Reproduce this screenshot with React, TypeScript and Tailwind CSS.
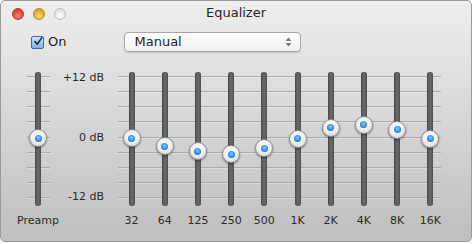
import React from "react";

const bands: { label: string; v: number }[] = [
  { label: "32", v: 0 },
  { label: "64", v: -1.6 },
  { label: "125", v: -2.6 },
  { label: "250", v: -3.2 },
  { label: "500", v: -2 },
  { label: "1K", v: -0.1 },
  { label: "2K", v: 2 },
  { label: "4K", v: 2.6 },
  { label: "8K", v: 1.6 },
  { label: "16K", v: -0.1 },
];

function GridLines() {
  return (
    <div className="flex h-[122px] flex-col justify-between">
      {Array.from({ length: 9 }).map((_, i) => (
        <div key={i} className="h-px bg-[#ababab] shadow-[0_1px_0_rgba(255,255,255,0.3)]" />
      ))}
    </div>
  );
}

function Knob({ v }: { v: number }) {
  const center = 66 - v * (60.5 / 12);
  return (
    <div
      className="absolute left-1/2 flex h-[18px] w-[18px] -translate-x-1/2 items-center justify-center rounded-full border border-[#8f8f8f] bg-[radial-gradient(circle_at_50%_35%,#ffffff_0%,#f2f2f2_45%,#cfcfcf_100%)] shadow-[0_1px_2px_rgba(0,0,0,0.45)]"
      style={{ top: center - 9 }}
    >
      <div className="h-[7px] w-[7px] rounded-full bg-[radial-gradient(circle_at_50%_40%,#8cc8ff_0%,#2f8cf2_55%,#1a63c8_100%)]" />
    </div>
  );
}

function Slider({ v, label, width }: { v: number; label: string; width: string }) {
  return (
    <div className={`flex flex-col items-center ${width}`}>
      <div className="relative flex h-[134px] w-[20px] justify-center">
        <div className="h-full w-[6px] rounded-full bg-[linear-gradient(90deg,#4d4d4d,#6a6a6a_50%,#555555)] shadow-[inset_0_0_1px_rgba(0,0,0,0.6)]" />
        <Knob v={v} />
      </div>
      <div className="mt-[8px] text-[11px] leading-[13px] text-[#2b2b2b]">{label}</div>
    </div>
  );
}

export default function App() {
  return (
    <div
      className="h-[244px] w-[474px] bg-white"
      style={{ fontFamily: '"DejaVu Sans", "Liberation Sans", sans-serif' }}
    >
      <div className="flex h-[242px] w-[472px] flex-col overflow-hidden rounded-[5px] border border-[#9a9a9a] bg-[linear-gradient(180deg,#eeeeee_0%,#e2e2e2_25%,#cfcfcf_65%,#bfbfbf_100%)]">
        {/* Title bar */}
        <div className="grid h-[24px] grid-cols-[1fr_auto_1fr] items-center">
          <div className="flex items-center gap-[9px] pl-[11px] pt-[1px]">
            <div className="h-[12px] w-[12px] rounded-full border border-[#b8352f] bg-[radial-gradient(circle_at_50%_70%,#ff8a80_0%,#e5483f_55%,#c8322b_100%)]" />
            <div className="h-[12px] w-[12px] rounded-full border border-[#b88a1e] bg-[radial-gradient(circle_at_50%_70%,#ffe07a_0%,#e0ad32_55%,#c48f1c_100%)]" />
            <div className="h-[12px] w-[12px] rounded-full border border-[#bdbdbd] bg-[radial-gradient(circle_at_50%_70%,#ffffff_0%,#e8e8e8_60%,#d6d6d6_100%)]" />
          </div>
          <div className="text-[13px] leading-[16px] text-[#262626]">Equalizer</div>
          <div />
        </div>

        {/* Controls */}
        <div className="mt-[7px] flex h-[20px] items-center">
          <div className="ml-[30px] flex h-[13px] w-[13px] items-center justify-center rounded-[2px] border border-[#3d6aa0] bg-[linear-gradient(180deg,#cfe4fb,#7fb1e8)]">
            <svg width="13" height="13" viewBox="0 0 13 13" className="-mt-[2px] ml-[1px]">
              <path d="M2.5 6.5 L5.5 10 L11.5 1.5" fill="none" stroke="#1b2a44" strokeWidth="2" strokeLinecap="round" strokeLinejoin="round" />
            </svg>
          </div>
          <div className="ml-[4px] text-[13px] leading-[16px] text-[#1f1f1f]">On</div>
          <div className="ml-[58px] flex h-[20px] w-[177px] items-center justify-between rounded-[4px] border border-[#a6a6a6] bg-[linear-gradient(180deg,#ffffff,#f1f1f1)] pl-[9px] pr-[8px] shadow-[0_1px_1px_rgba(0,0,0,0.12)]">
            <span className="text-[13px] leading-[16px] text-[#1f1f1f]">Manual</span>
            <svg width="7" height="10" viewBox="0 0 7 10">
              <path d="M3.5 0.5 L6.5 4 L0.5 4 Z" fill="#7a7a7a" />
              <path d="M3.5 9.5 L6.5 6 L0.5 6 Z" fill="#7a7a7a" />
            </svg>
          </div>
        </div>

        {/* Sliders */}
        <div className="mt-[20px] flex items-start">
          {/* Preamp */}
          <div className="relative ml-[13px] flex w-[48px] justify-center">
            <div className="absolute left-[13px] top-[4px] w-[23px]">
              <GridLines />
            </div>
            <Slider v={0} label="Preamp" width="w-[48px]" />
          </div>

          {/* dB labels */}
          <div className="-mt-[1px] flex h-[132px] w-[42px] flex-col items-end justify-between text-[11px] leading-[13px] text-[#2b2b2b]">
            <span>+12 dB</span>
            <span>0 dB</span>
            <span>-12 dB</span>
          </div>

          {/* Bands */}
          <div className="relative ml-[11px] flex">
            <div className="absolute left-[3px] top-[4px] w-[323px]">
              <GridLines />
            </div>
            {bands.map((b) => (
              <Slider key={b.label} v={b.v} label={b.label} width="w-[33.2px]" />
            ))}
          </div>
        </div>
      </div>
    </div>
  );
}
